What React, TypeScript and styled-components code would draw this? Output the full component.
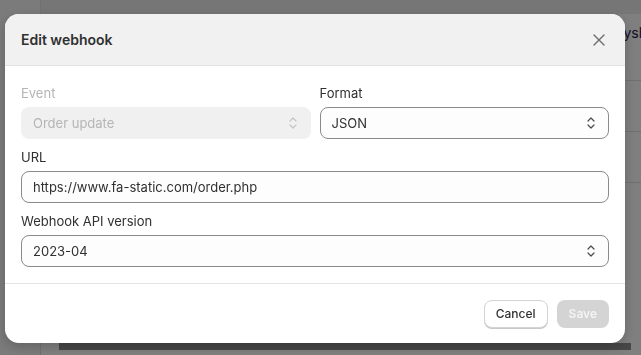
import React from 'react';
import styled, { createGlobalStyle } from 'styled-components';

const GlobalStyle = createGlobalStyle`
    html, body {
        margin: 0;
        padding: 0;
        width: 641px;
        height: 355px;
        overflow: hidden;
        font-family: Inter, "Noto Sans", sans-serif;
    }
`;

const Chevrons = () => (
    <svg width="10" height="14" viewBox="0 0 10 14" fill="none">
        <path d="M2 5l3-3 3 3M2 9l3 3 3-3" stroke="currentColor" strokeWidth="1.2" strokeLinecap="round" strokeLinejoin="round" />
    </svg>
);

const CloseIcon = () => (
    <svg width="12" height="12" viewBox="0 0 12 12" fill="none">
        <path d="M1 1l10 10M11 1L1 11" stroke="currentColor" strokeWidth="1.4" strokeLinecap="round" />
    </svg>
);

const App = () => {
    return (
        <>
            <GlobalStyle />
            <Page>
                <Sidebar />
                <Main>
                    <TopRow><PeekText>ysh</PeekText></TopRow>
                    <MainRow />
                    <MainRow />
                    <BottomBar />
                </Main>
            </Page>
            <Overlay>
                <Modal>
                    <Header>
                        <Title>Edit webhook</Title>
                        <CloseButton><CloseIcon /></CloseButton>
                    </Header>
                    <Body>
                        <FieldRow>
                            <Field>
                                <Label disabled>Event</Label>
                                <Select disabled>
                                    <span>Order update</span>
                                    <Chevrons />
                                </Select>
                            </Field>
                            <Field>
                                <Label>Format</Label>
                                <Select>
                                    <span>JSON</span>
                                    <Chevrons />
                                </Select>
                            </Field>
                        </FieldRow>
                        <Field>
                            <Label>URL</Label>
                            <Input>https://www.fa-static.com/order.php</Input>
                        </Field>
                        <Field>
                            <Label>Webhook API version</Label>
                            <Select>
                                <span>2023-04</span>
                                <Chevrons />
                            </Select>
                        </Field>
                    </Body>
                    <Footer>
                        <Button>Cancel</Button>
                        <Button primary disabled>Save</Button>
                    </Footer>
                </Modal>
            </Overlay>
        </>
    );
};

export default App;

const Page = styled.div`
    display: flex;
    width: 641px;
    height: 355px;
    background: #f4f4f4;
`;

const Sidebar = styled.div`
    width: 40px;
    flex-shrink: 0;
    background: #f7f7f7;
    border-right: 1px solid #e3e3e3;
`;

const Main = styled.div`
    flex: 1;
    display: flex;
    flex-direction: column;
    background: #ffffff;
`;

const TopRow = styled.div`
    height: 81px;
    box-sizing: border-box;
    border-top: 14px solid #ececec;
    border-bottom: 1px solid #e1e1e1;
    display: flex;
    justify-content: flex-end;
    padding-top: 10px;
`;

const PeekText = styled.span`
    font-size: 14px;
    color: #1a1a4a;
    margin-right: -6px;
`;

const MainRow = styled.div`
    height: 50px;
    border-bottom: 1px solid #e1e1e1;
    &:last-of-type {
        flex: 1;
        border-bottom: none;
    }
`;

const BottomBar = styled.div`
    height: 7px;
    margin: auto 10px 5px 18px;
    background: #8e8e8e;
`;

const Overlay = styled.div`
    position: fixed;
    inset: 0;
    background: rgba(0, 0, 0, 0.5);
    padding: 14px 0 0 5px;
`;

const Modal = styled.div`
    width: 620px;
    height: 329px;
    background: #ffffff;
    border-radius: 14px;
    overflow: hidden;
    display: flex;
    flex-direction: column;
    box-shadow: 0 4px 12px rgba(0, 0, 0, 0.2);
`;

const Header = styled.div`
    height: 52px;
    box-sizing: border-box;
    background: #f1f1f1;
    border-bottom: 1px solid #e3e3e3;
    display: flex;
    align-items: center;
    justify-content: space-between;
    padding: 0 20px 0 16px;
`;

const Title = styled.h2`
    margin: 0;
    font-size: 14px;
    font-weight: 600;
    color: #303030;
`;

const CloseButton = styled.button`
    border: none;
    background: none;
    padding: 0;
    color: #6b6b6b;
    display: flex;
    cursor: pointer;
`;

const Body = styled.div`
    padding: 18px 16px 16px;
    display: flex;
    flex-direction: column;
    gap: 9px;
    border-bottom: 1px solid #e3e3e3;
`;

const FieldRow = styled.div`
    display: grid;
    grid-template-columns: 1fr 1fr;
    gap: 9px;
`;

const Field = styled.div`
    display: flex;
    flex-direction: column;
    gap: 5px;
`;

const Label = styled.label<{ disabled?: boolean }>`
    font-size: 13px;
    line-height: 18px;
    color: ${({ disabled }) => (disabled ? '#b5b5b5' : '#303030')};
`;

const Select = styled.div<{ disabled?: boolean }>`
    height: 32px;
    box-sizing: border-box;
    border-radius: 8px;
    border: 1px solid ${({ disabled }) => (disabled ? 'transparent' : '#8a8a8a')};
    background: ${({ disabled }) => (disabled ? '#f0f0f0' : '#fdfdfd')};
    color: ${({ disabled }) => (disabled ? '#b5b5b5' : '#303030')};
    display: flex;
    align-items: center;
    justify-content: space-between;
    padding: 0 12px 0 11px;
    font-size: 13px;

    svg {
        color: ${({ disabled }) => (disabled ? '#c4c4c4' : '#4a4a4a')};
    }
`;

const Input = styled.div`
    height: 32px;
    box-sizing: border-box;
    border-radius: 8px;
    border: 1px solid #8a8a8a;
    background: #fdfdfd;
    color: #303030;
    display: flex;
    align-items: center;
    padding: 0 11px;
    font-size: 13px;
`;

const Footer = styled.div`
    flex: 1;
    display: flex;
    align-items: center;
    justify-content: flex-end;
    gap: 9px;
    padding: 0 16px 0 0;
`;

const Button = styled.button<{ primary?: boolean }>`
    height: 28px;
    box-sizing: border-box;
    border-radius: 8px;
    font-family: inherit;
    font-size: 12px;
    font-weight: ${({ primary }) => (primary ? 600 : 450)};
    padding: 0 11px;
    border: 1px solid ${({ primary }) => (primary ? 'transparent' : '#d4d4d4')};
    background: ${({ primary }) => (primary ? '#d4d4d4' : '#ffffff')};
    color: ${({ primary }) => (primary ? '#f4f4f4' : '#303030')};
    box-shadow: ${({ primary }) => (primary ? 'none' : '0 1px 0 #c8c8c8')};
    cursor: pointer;
`;
